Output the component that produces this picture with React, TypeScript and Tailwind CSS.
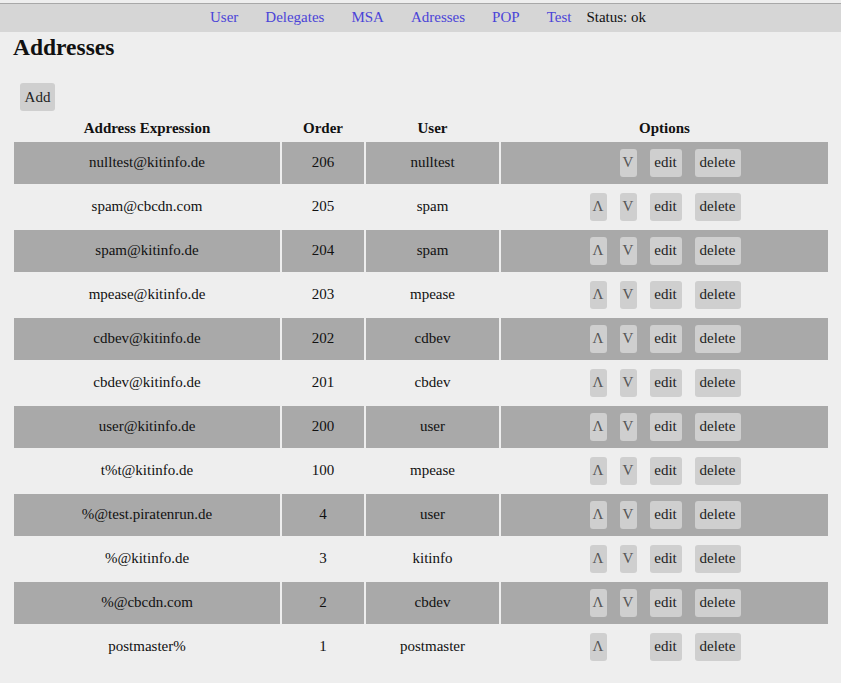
import React from "react";

const rows: [string, string, string][] = [
  ["nulltest@kitinfo.de", "206", "nulltest"],
  ["spam@cbcdn.com", "205", "spam"],
  ["spam@kitinfo.de", "204", "spam"],
  ["mpease@kitinfo.de", "203", "mpease"],
  ["cdbev@kitinfo.de", "202", "cdbev"],
  ["cbdev@kitinfo.de", "201", "cbdev"],
  ["user@kitinfo.de", "200", "user"],
  ["t%t@kitinfo.de", "100", "mpease"],
  ["%@test.piratenrun.de", "4", "user"],
  ["%@kitinfo.de", "3", "kitinfo"],
  ["%@cbcdn.com", "2", "cbdev"],
  ["postmaster%", "1", "postmaster"],
];

const navItems = ["User", "Delegates", "MSA", "Adresses", "POP", "Test"];

function Btn({ children, hidden, w, light }: { children: React.ReactNode; hidden?: boolean; w: string; light?: boolean }) {
  return (
    <span
      className={`inline-flex h-[28px] items-center justify-center rounded-[3px] bg-[#cfcfcf] ${light ? "text-[#555] font-light" : "text-[#222]"} ${w} ${hidden ? "invisible" : ""}`}
    >
      {children}
    </span>
  );
}

export default function App() {
  return (
    <div className="min-h-[683px] w-[841px] bg-[#eeeeee] text-[15px] text-[#111]" style={{ fontFamily: '"Liberation Serif", serif' }}>
      <div className="h-[3px] bg-[#eeeeee]" />
      <div className="flex h-[29px] items-center justify-center border-t border-[#a8a8a8] bg-[#d6d6d6] pl-[15px]">
        <div className="flex items-center gap-[27px] pb-[2px]">
          {navItems.map((n) => (
            <span key={n} className="text-[#4b44d8]">{n}</span>
          ))}
        </div>
        <span className="ml-[15px] pb-[2px] text-[#111]">Status: ok</span>
      </div>
      <h1 className="ml-[13px] mt-[1px] text-[23.5px] font-bold leading-[28px]">Addresses</h1>
      <div className="ml-[20px] mt-[22px]">
        <Btn w="w-[35px]">Add</Btn>
      </div>
      <table className="ml-[12px] mt-[4px] w-[818px] border-separate border-spacing-[2px] text-center">
        <thead>
          <tr className="h-[22px]">
            <th className="w-[266px] font-bold">Address Expression</th>
            <th className="w-[82px] font-bold">Order</th>
            <th className="w-[133px] font-bold">User</th>
            <th className="w-[327px] font-bold">Options</th>
          </tr>
        </thead>
        <tbody>
          {rows.map((r, i) => {
            const bg = i % 2 === 0 ? "bg-[#a9a9a9]" : "";
            return (
              <tr key={i} className="h-[42px]">
                <td className={bg}>{r[0]}</td>
                <td className={bg}>{r[1]}</td>
                <td className={bg}>{r[2]}</td>
                <td className={bg}>
                  <div className="flex items-center justify-center gap-[13px] pl-[1px]">
                    <Btn w="w-[17px]" light hidden={i === 0}>Λ</Btn>
                    <Btn w="w-[17px]" light hidden={i === rows.length - 1}>V</Btn>
                    <Btn w="w-[32px]">edit</Btn>
                    <Btn w="w-[46px]">delete</Btn>
                  </div>
                </td>
              </tr>
            );
          })}
        </tbody>
      </table>
    </div>
  );
}
